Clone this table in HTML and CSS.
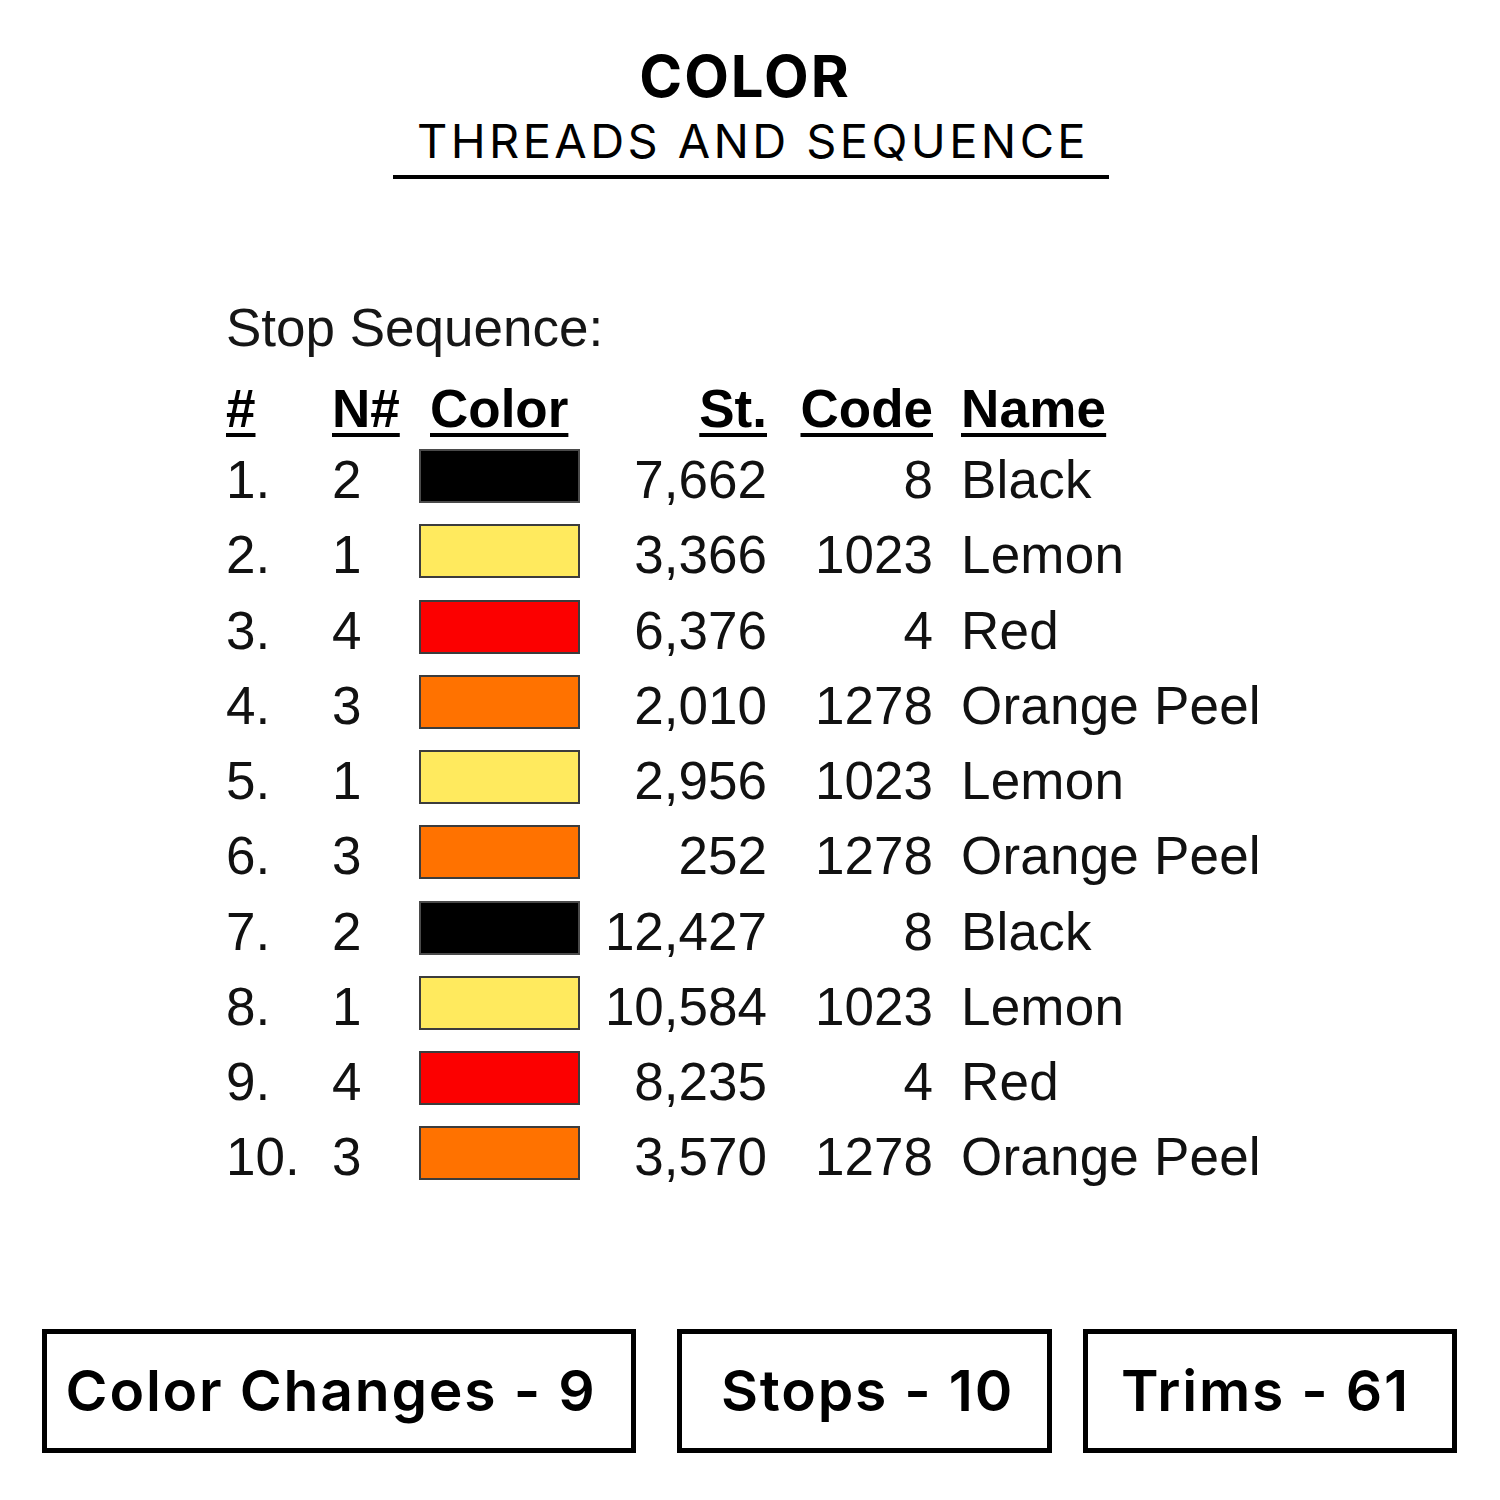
FILE: index.html
```html
<!DOCTYPE html>
<html lang="en">
<head>
<meta charset="utf-8">
<title>Color Threads and Sequence</title>
<link rel="stylesheet" href="styles.css">
</head>
<body>
<div class="page">
  <header class="title">
    <div class="title-main">COLOR</div>
    <div class="title-sub">THREADS AND SEQUENCE</div>
  </header>

  <section class="seq">
    <div class="seq-title">Stop Sequence:</div>
    <div class="seq-grid">
      <div class="hd c-num">#</div>
      <div class="hd c-n">N#</div>
      <div class="hd c-color">Color</div>
      <div class="hd c-st">St.</div>
      <div class="hd c-code">Code</div>
      <div class="hd c-name">Name</div>

      <div class="c-num">1.</div><div class="c-n">2</div><div class="c-sw"><span class="sw black"></span></div><div class="c-st">7,662</div><div class="c-code">8</div><div class="c-name">Black</div>
      <div class="c-num">2.</div><div class="c-n">1</div><div class="c-sw"><span class="sw lemon"></span></div><div class="c-st">3,366</div><div class="c-code">1023</div><div class="c-name">Lemon</div>
      <div class="c-num">3.</div><div class="c-n">4</div><div class="c-sw"><span class="sw red"></span></div><div class="c-st">6,376</div><div class="c-code">4</div><div class="c-name">Red</div>
      <div class="c-num">4.</div><div class="c-n">3</div><div class="c-sw"><span class="sw orange"></span></div><div class="c-st">2,010</div><div class="c-code">1278</div><div class="c-name">Orange Peel</div>
      <div class="c-num">5.</div><div class="c-n">1</div><div class="c-sw"><span class="sw lemon"></span></div><div class="c-st">2,956</div><div class="c-code">1023</div><div class="c-name">Lemon</div>
      <div class="c-num">6.</div><div class="c-n">3</div><div class="c-sw"><span class="sw orange"></span></div><div class="c-st">252</div><div class="c-code">1278</div><div class="c-name">Orange Peel</div>
      <div class="c-num">7.</div><div class="c-n">2</div><div class="c-sw"><span class="sw black"></span></div><div class="c-st">12,427</div><div class="c-code">8</div><div class="c-name">Black</div>
      <div class="c-num">8.</div><div class="c-n">1</div><div class="c-sw"><span class="sw lemon"></span></div><div class="c-st">10,584</div><div class="c-code">1023</div><div class="c-name">Lemon</div>
      <div class="c-num">9.</div><div class="c-n">4</div><div class="c-sw"><span class="sw red"></span></div><div class="c-st">8,235</div><div class="c-code">4</div><div class="c-name">Red</div>
      <div class="c-num">10.</div><div class="c-n">3</div><div class="c-sw"><span class="sw orange"></span></div><div class="c-st">3,570</div><div class="c-code">1278</div><div class="c-name">Orange Peel</div>
    </div>
  </section>

  <footer class="stats">
    <div class="stat stat-1">Color Changes - 9</div>
    <div class="stat stat-2">Stops - 10</div>
    <div class="stat stat-3">Trims - 61</div>
  </footer>
</div>
</body>
</html>
```

FILE: styles.css
```css
html, body {
  margin: 0;
  padding: 0;
  background: #ffffff;
}

.page {
  width: 1500px;
  height: 1500px;
  display: flex;
  flex-direction: column;
  color: #000;
  padding-top: 47px;
  box-sizing: border-box;
}

/* ---------- title ---------- */
.title {
  width: 716px;
  margin-left: 393px;
  border-bottom: 4px solid #000;
  padding-bottom: 11px;
  display: flex;
  flex-direction: column;
  align-items: center;
  font-family: Inter, "Liberation Sans", sans-serif;
}

.title-main {
  font-size: 58px;
  line-height: 58px;
  font-weight: 700;
  letter-spacing: 2px;
  margin-left: -12px;
}

.title-sub {
  margin-top: 12px;
  font-size: 47px;
  line-height: 47px;
  font-weight: 400;
  letter-spacing: 3.4px;
  margin-right: -4px;
}

/* ---------- sequence table ---------- */
.seq {
  margin-top: 111px;
  margin-left: 226px;
  font-family: "Liberation Sans", Arial, sans-serif;
  font-size: 53px;
}

.seq-title {
  height: 75px;
  line-height: 75.25px;
  margin-bottom: 6px;
  color: #161616;
}

.seq-grid {
  display: grid;
  grid-template-columns: 106px 87px 161px 187px 166px auto;
  grid-template-rows: 71px;
  grid-auto-rows: 75.25px;
  line-height: 75.25px;
  color: #111;
}

.hd {
  font-weight: 700;
  color: #000;
  text-decoration: underline;
  text-decoration-thickness: 4px;
  text-underline-offset: 6px;
  height: 71px;
}

.c-color {
  padding-left: 11px;
}

.c-st,
.c-code {
  text-align: right;
}

.c-name {
  padding-left: 28px;
  white-space: nowrap;
  letter-spacing: 0.2px;
}

.c-sw {
  display: flex;
  align-items: flex-start;
}

.sw {
  display: block;
  width: 161px;
  height: 54px;
  margin-top: 7px;
  box-sizing: border-box;
  border: 2px solid #3c3c3c;
}

.sw.black { background: #000000; border-color: #4a4a4a; }
.sw.lemon { background: #ffea5e; }
.sw.red { background: #fc0000; }
.sw.orange { background: #ff7200; }

/* ---------- stats ---------- */
.stats {
  margin-top: 134px;
  display: flex;
  font-family: Inter, "Liberation Sans", sans-serif;
}

.stat {
  height: 124px;
  box-sizing: border-box;
  border: 5px solid #000;
  display: flex;
  align-items: center;
  justify-content: center;
  font-size: 57px;
  font-weight: 600;
  letter-spacing: 1.8px;
  white-space: nowrap;
}

.stat-1 {
  width: 594px;
  margin-left: 42px;
  padding-right: 16px;
}

.stat-2 {
  width: 375px;
  margin-left: 41px;
  padding-left: 6px;
}

.stat-3 {
  width: 374px;
  margin-left: 31px;
  padding-right: 9px;
}
```
